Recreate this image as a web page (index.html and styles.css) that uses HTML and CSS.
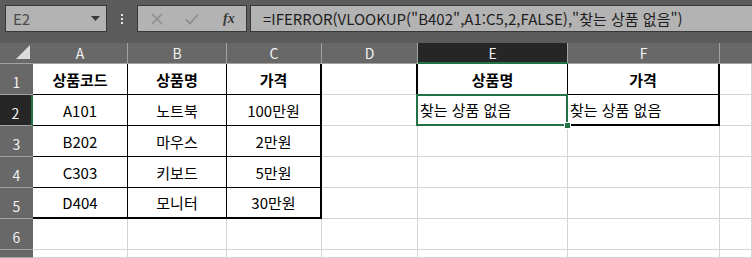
FILE: index.html
```html
<!DOCTYPE html>
<html lang="ko">
<head>
  <meta charset="UTF-8" />
  <title>Sheet</title>
  <link rel="stylesheet" href="styles.css">
</head>
<body>
  <div class="toolbar">
    <div class="namebox">
      <span>E2</span>
      <svg class="caret" width="9" height="5" viewBox="0 0 9 5"><path d="M0 0H9L4.5 5Z" fill="#3a3a3a"/></svg>
    </div>
    <div class="grip"><i></i><i></i><i></i></div>
    <div class="fbtns">
      <svg width="12" height="12" viewBox="0 0 12 12"><path d="M1 1L11 11M11 1L1 11" stroke="#8e8e8e" stroke-width="1.6" fill="none"/></svg>
      <svg width="14" height="12" viewBox="0 0 14 12"><path d="M1 6.5L5 10.5L13 1.5" stroke="#8e8e8e" stroke-width="1.8" fill="none"/></svg>
      <span class="fx">fx</span>
    </div>
    <div class="fbox">=IFERROR(VLOOKUP("B402",A1:C5,2,FALSE),"찾는 상품 없음")</div>
  </div>

  <div class="sheet">
    <div class="h corner"><svg width="14" height="14" viewBox="0 0 14 14"><path d="M14 0V14H0Z" fill="#dcdcdc"/></svg></div>
    <div class="h">A</div>
    <div class="h">B</div>
    <div class="h">C</div>
    <div class="h">D</div>
    <div class="h sel-col">E</div>
    <div class="h">F</div>
    <div class="h last"></div>

    <div class="rh">1</div>
    <div class="c t b">상품코드</div>
    <div class="c t b">상품명</div>
    <div class="c t tr b">가격</div>
    <div class="c d1"></div>
    <div class="c t b">상품명</div>
    <div class="c t tr b">가격</div>
    <div class="c"></div>

    <div class="rh sel-row">2</div>
    <div class="c t">A101</div>
    <div class="c t">노트북</div>
    <div class="c t tr">100만원</div>
    <div class="c"></div>
    <div class="c t tb left active"><span>찾는 상품 없음</span><div class="selection"><i class="handle"></i></div></div>
    <div class="c t tr tb left">찾는 상품 없음</div>
    <div class="c"></div>

    <div class="rh">3</div>
    <div class="c t">B202</div>
    <div class="c t">마우스</div>
    <div class="c t tr">2만원</div>
    <div class="c"></div>
    <div class="c"></div>
    <div class="c"></div>
    <div class="c"></div>

    <div class="rh">4</div>
    <div class="c t">C303</div>
    <div class="c t">키보드</div>
    <div class="c t tr">5만원</div>
    <div class="c"></div>
    <div class="c"></div>
    <div class="c"></div>
    <div class="c"></div>

    <div class="rh">5</div>
    <div class="c t tb">D404</div>
    <div class="c t tb">모니터</div>
    <div class="c t tr tb">30만원</div>
    <div class="c"></div>
    <div class="c"></div>
    <div class="c"></div>
    <div class="c"></div>

    <div class="rh">6</div>
    <div class="c"></div>
    <div class="c"></div>
    <div class="c"></div>
    <div class="c"></div>
    <div class="c"></div>
    <div class="c"></div>
    <div class="c"></div>

    <div class="rh"></div>
    <div class="c"></div>
    <div class="c"></div>
    <div class="c"></div>
    <div class="c"></div>
    <div class="c"></div>
    <div class="c"></div>
    <div class="c"></div>
  </div>
</body>
</html>
```

FILE: styles.css
```css
* {
  box-sizing: border-box;
}
body {
  margin: 0;
  width: 752px;
  height: 258px;
  overflow: hidden;
  background-color: #fff;
  font-family: "Noto Sans CJK KR", "Noto Sans", sans-serif;
}
.toolbar {
  height: 43px;
  background-color: #5c5c5c;
  display: flex;
  align-items: flex-start;
  padding-top: 5px;
  padding-left: 5px;
}
.namebox {
  width: 102px;
  height: 27px;
  background-color: #b3b3b3;
  border: 1px solid #383838;
  display: flex;
  align-items: center;
  justify-content: space-between;
  padding: 0 6px 0 7px;
  font-size: 15px;
  color: #4a4a4a;
}
.namebox span {
  margin-top: -1px;
}
.grip {
  width: 30px;
  height: 27px;
  display: flex;
  flex-direction: column;
  align-items: center;
  justify-content: center;
  gap: 2px;
}
.grip i {
  display: block;
  width: 2px;
  height: 2px;
  background-color: #e6e6e6;
}
.fbtns {
  width: 110px;
  height: 27px;
  background-color: #b3b3b3;
  border: 1px solid #383838;
  display: flex;
  align-items: center;
  padding-left: 13px;
  gap: 22px;
}
.fx {
  font-family: "Liberation Serif", serif;
  font-style: italic;
  font-weight: bold;
  font-size: 14px;
  color: #3a3a3a;
  margin-left: 2px;
}
.fbox {
  flex: 1;
  height: 27px;
  margin-left: 3px;
  background-color: #b3b3b3;
  border: 1px solid #383838;
  border-right: none;
  padding-left: 12px;
  font-size: 15px;
  line-height: 25px;
  color: #1e1e1e;
  white-space: nowrap;
}
.sheet {
  display: grid;
  grid-template-columns: 33px 95px 99px 95px 96px 150px 152px 1fr;
  grid-template-rows: 21px repeat(6, 31px) 1fr;
  height: 215px;
}
.h {
  background-color: #686868;
  color: #f2f2f2;
  font-size: 14px;
  display: flex;
  align-items: center;
  justify-content: center;
  border-right: 1px solid #a3a3a3;
  border-bottom: 1px solid #a3a3a3;
}
.h.last {
  border-right: none;
}
.corner {
  justify-content: flex-end;
  align-items: flex-end;
  padding: 0 3px 4px 0;
  border-right: none;
}
.sel-col {
  background-color: #262626;
  border-bottom: 2px solid #217346;
}
.rh {
  background-color: #686868;
  color: #f2f2f2;
  font-size: 14px;
  display: flex;
  align-items: flex-end;
  justify-content: center;
  padding-bottom: 2px;
  border-bottom: 1px solid #a3a3a3;
}
.sel-row {
  background-color: #262626;
  border-right: 2px solid #217346;
}
.c {
  font-size: 15px;
  color: #000;
  display: flex;
  align-items: center;
  justify-content: center;
  white-space: nowrap;
  border-right: 1px solid #d4d4d4;
  border-bottom: 1px solid #d4d4d4;
}
.c.t {
  border-right-color: #000;
  border-bottom-color: #000;
}
.c.tr {
  border-right: 2px solid #000;
}
.c.tb {
  border-bottom: 2px solid #000;
}
.c.b {
  font-weight: bold;
}
.c.d1 {
  border-right: 2px solid #000;
}
.c.left {
  justify-content: flex-start;
  padding-left: 2px;
}
.active {
  position: relative;
}
.selection {
  position: absolute;
  left: -2px;
  top: -1px;
  right: -1px;
  bottom: -2px;
  border: 2px solid #217346;
}
.handle {
  position: absolute;
  right: -5px;
  bottom: -5px;
  width: 7px;
  height: 7px;
  background-color: #217346;
  border: 1px solid #fff;
}
```
